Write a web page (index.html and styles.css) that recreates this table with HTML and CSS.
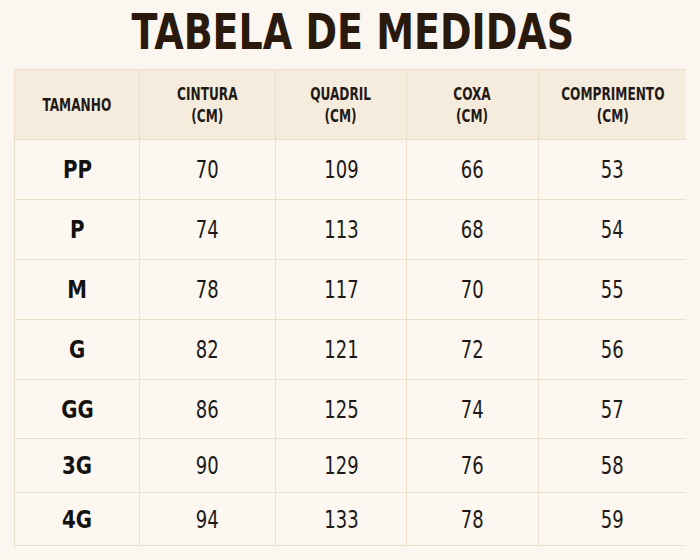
FILE: index.html
```html
<!DOCTYPE html>
<html lang="pt">
<head>
<meta charset="utf-8">
<title>Tabela de Medidas</title>
<link rel="stylesheet" href="styles.css">
</head>
<body>
<h1 class="title"><span class="title-text">TABELA DE MEDIDAS</span></h1>
<div class="table">
  <div class="cell head"><span class="t">TAMANHO</span></div>
  <div class="cell head"><span class="t">CINTURA<br>(CM)</span></div>
  <div class="cell head"><span class="t">QUADRIL<br>(CM)</span></div>
  <div class="cell head"><span class="t">COXA<br>(CM)</span></div>
  <div class="cell head"><span class="t">COMPRIMENTO<br>(CM)</span></div>

  <div class="cell size"><span class="t">PP</span></div><div class="cell"><span class="t">70</span></div><div class="cell"><span class="t">109</span></div><div class="cell"><span class="t">66</span></div><div class="cell"><span class="t">53</span></div>
  <div class="cell size"><span class="t">P</span></div><div class="cell"><span class="t">74</span></div><div class="cell"><span class="t">113</span></div><div class="cell"><span class="t">68</span></div><div class="cell"><span class="t">54</span></div>
  <div class="cell size"><span class="t">M</span></div><div class="cell"><span class="t">78</span></div><div class="cell"><span class="t">117</span></div><div class="cell"><span class="t">70</span></div><div class="cell"><span class="t">55</span></div>
  <div class="cell size"><span class="t">G</span></div><div class="cell"><span class="t">82</span></div><div class="cell"><span class="t">121</span></div><div class="cell"><span class="t">72</span></div><div class="cell"><span class="t">56</span></div>
  <div class="cell size"><span class="t">GG</span></div><div class="cell"><span class="t">86</span></div><div class="cell"><span class="t">125</span></div><div class="cell"><span class="t">74</span></div><div class="cell"><span class="t">57</span></div>
  <div class="cell size"><span class="t">3G</span></div><div class="cell"><span class="t">90</span></div><div class="cell"><span class="t">129</span></div><div class="cell"><span class="t">76</span></div><div class="cell"><span class="t">58</span></div>
  <div class="cell size"><span class="t">4G</span></div><div class="cell"><span class="t">94</span></div><div class="cell"><span class="t">133</span></div><div class="cell"><span class="t">78</span></div><div class="cell"><span class="t">59</span></div>
</div>
</body>
</html>
```
FILE: styles.css
```css
html, body {
  margin: 0;
  padding: 0;
}
body {
  background: #fbf7f0;
  width: 700px;
  height: 560px;
  font-family: "DejaVu Sans Condensed", "DejaVu Sans", sans-serif;
  color: #1c1a18;
}
.title {
  margin: 0 0 12px 0;
  padding: 7px 0 0 6px;
  font-size: 50px;
  line-height: 50px;
  font-weight: 700;
  text-align: center;
  color: #2a190d;
}
.title-text {
  display: inline-block;
  transform: scaleX(0.845);
}
.table {
  margin-left: 14px;
  width: 672px;
  box-sizing: border-box;
  display: grid;
  grid-template-columns: 124px 135px 130px 131px 147px;
  grid-template-rows: 69px 59px 59px 59px 59px 58px 53px 52px;
  gap: 1px;
  padding: 1px;
  background: #ecdfca;
}
.cell {
  background: #fcf8f1;
  display: flex;
  align-items: center;
  justify-content: center;
  text-align: center;
  font-size: 25px;
  color: #1c1a18;
}
.t {
  display: inline-block;
  transform: scaleX(0.8);
}
.head {
  background: #f6ecdd;
  font-size: 18px;
  font-weight: 700;
  line-height: 22px;
  color: #1f1a15;
}
.head .t {
  transform: scaleX(0.75);
}
.size {
  font-weight: 700;
  color: #141210;
}
.size .t {
  transform: scaleX(0.88);
}
```
